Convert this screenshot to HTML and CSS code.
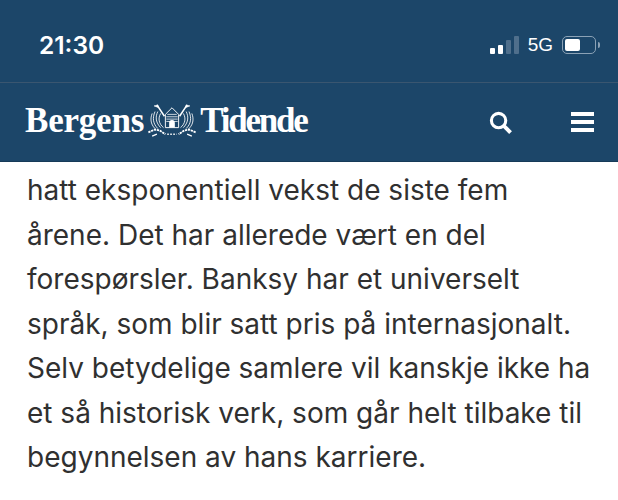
FILE: index.html
```html
<!DOCTYPE html>
<html lang="en">
<head>
    <meta charset="UTF-8">
    <meta name="viewport" content="width=device-width, initial-scale=1.0">
    <title>Bergens Tidende</title>
    <link rel="stylesheet" href="styles.css">
</head>
<body>
    <div class="status-bar">
        <span class="clock">21:30</span>
        <div class="status-icons">
            <div class="signal">
                <span class="bar bar-1"></span>
                <span class="bar bar-2"></span>
                <span class="bar bar-3"></span>
                <span class="bar bar-4"></span>
            </div>
            <span class="network">5G</span>
            <div class="battery">
                <div class="battery-body"><span class="battery-level"></span></div>
                <span class="battery-cap"></span>
            </div>
        </div>
    </div>
    <header class="site-header">
        <div class="logo">
            <span class="logo-word">Bergens</span>
            <svg class="emblem" width="50" height="34" viewBox="0 0 52 36" fill="none" stroke="#fff">
                <path d="M10 1l8 12M42 1l-8 12" stroke-width="1.6"/>
                <path d="M7 2l4-1 1 3zM45 2l-4-1-1 3z" fill="#fff" stroke-width="0.6"/>
                <path d="M26 4l-7 7v14h14V11z" stroke-width="1"/>
                <path d="M21 11h10M20 13.5h12M20 16h12M20 18.5h12" stroke-width="0.8"/>
                <path d="M23 25v-5a3 3 0 0 1 6 0v5z" fill="#fff" stroke="none"/>
                <path d="M17 25C12 21 11 15 14 10M35 25c5-4 6-10 3-15" stroke-width="0.9"/>
                <path d="M14 25C9 20 8 14 11 8M38 25c5-5 6-11 3-17" stroke-width="0.9"/>
                <path d="M11 26C6 21 5 15 8 8M41 26c5-5 6-11 3-18" stroke-width="0.9"/>
                <path d="M8 26C3 21 3 15 5 10M44 26c5-5 5-11 3-16" stroke-width="0.9"/>
                <path d="M1 30l7-3 5 1 6 4M51 30l-7-3-5 1-6 4" stroke-width="2" stroke-dasharray="2.4 0.8"/>
                <path d="M5 34l5-2M47 34l-5-2" stroke-width="1.4"/>
                <path d="M21 32h10" stroke-width="1.6" stroke-dasharray="1.6 1.6"/>
            </svg>
            <span class="logo-word logo-word-narrow">Tidende</span>
        </div>
        <div class="header-actions">
            <svg class="search-icon" width="23" height="23" viewBox="0 0 24 24" fill="none" stroke="#fff">
                <circle cx="10" cy="10" r="7.5" stroke-width="3.2"/>
                <path d="M15.5 15.5l7 7" stroke-width="4"/>
            </svg>
            <div class="menu-icon">
                <span></span>
                <span></span>
                <span></span>
            </div>
        </div>
    </header>
    <main class="article">
        <p>hatt eksponentiell vekst de siste fem<br>
        årene. Det har allerede vært en del<br>
        forespørsler. Banksy har et universelt<br>
        språk, som blir satt pris på internasjonalt.<br>
        Selv betydelige samlere vil kanskje ikke ha<br>
        et så historisk verk, som går helt tilbake til<br>
        begynnelsen av hans karriere.</p>
    </main>
</body>
</html>
```

FILE: styles.css
```css
html, body {
    margin: 0;
    padding: 0;
}
body {
    width: 618px;
    height: 500px;
    overflow: hidden;
    background-color: #fff;
    font-family: Inter, 'Liberation Sans', sans-serif;
}
.status-bar {
    height: 83px;
    box-sizing: border-box;
    padding: 0 18px 0 39px;
    background-color: #1c4669;
    border-bottom: 1px solid #3a5670;
    display: flex;
    align-items: center;
    justify-content: space-between;
    color: #fff;
}
.clock {
    font-family: Inter, sans-serif;
    font-size: 24.5px;
    font-weight: 600;
    margin-top: 8px;
}
.status-icons {
    display: flex;
    align-items: center;
    margin-top: 8px;
}
.signal {
    display: flex;
    align-items: flex-end;
    gap: 3px;
    height: 18px;
}
.bar {
    width: 5px;
    border-radius: 1px;
    background-color: #fff;
}
.bar-1 { height: 6px; }
.bar-2 { height: 9px; }
.bar-3 { height: 14px; background-color: #4f6f8c; }
.bar-4 { height: 18px; background-color: #4f6f8c; }
.network {
    font-family: 'Liberation Sans', sans-serif;
    font-size: 19px;
    margin-left: 9px;
}
.battery {
    display: flex;
    align-items: center;
    margin-left: 9px;
}
.battery-body {
    width: 34px;
    height: 18px;
    box-sizing: border-box;
    padding: 2px;
    border: 1.5px solid #8ba2b6;
    border-radius: 5px;
    display: flex;
}
.battery-level {
    width: 15px;
    background-color: #fff;
    border-radius: 2px;
}
.battery-cap {
    width: 2px;
    height: 6px;
    margin-left: 2px;
    background-color: #8ba2b6;
    border-radius: 0 2px 2px 0;
}
.site-header {
    height: 79px;
    box-sizing: border-box;
    padding: 0 24px 0 25px;
    background-color: #1c4669;
    display: flex;
    align-items: center;
    justify-content: space-between;
    border-bottom: 1px solid #163a58;
}
.logo {
    display: flex;
    align-items: center;
    gap: 3px;
    margin-bottom: 3px;
}
.logo-word {
    font-family: 'Liberation Serif', serif;
    font-size: 35px;
    font-weight: 700;
    color: #fff;
    letter-spacing: -0.2px;
}
.logo-word-narrow {
    letter-spacing: -2.2px;
}
.emblem {
    display: block;
}
.header-actions {
    display: flex;
    align-items: center;
    gap: 59px;
}
.search-icon {
    display: block;
}
.menu-icon {
    width: 23px;
    display: flex;
    flex-direction: column;
    gap: 4px;
}
.menu-icon span {
    height: 4px;
    background-color: #fff;
}
.article {
    padding: 6px 0 0 27px;
}
.article p {
    margin: 0;
    font-size: 28px;
    line-height: 44.5px;
    color: #303030;
    white-space: nowrap;
}
```
